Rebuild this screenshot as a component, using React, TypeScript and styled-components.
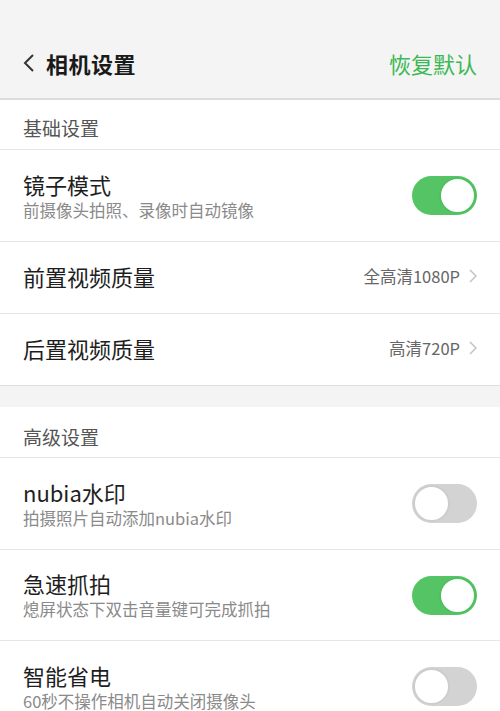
import React, { useState } from 'react';
import styled, { createGlobalStyle } from 'styled-components';

const GlobalStyle = createGlobalStyle`
  body {
    margin: 0;
    background: #ffffff;
    font-family: "Noto Sans CJK SC", "Noto Sans", sans-serif;
  }
`;

const Page = styled.div`
  width: 500px;
  min-height: 711px;
  background: #ffffff;
`;

const Header = styled.header`
  height: 100px;
  box-sizing: border-box;
  background: #f4f4f4;
  border-bottom: 2px solid #dcdcdc;
  display: flex;
  align-items: center;
  justify-content: space-between;
  padding: 28px 23px 0 22px;
`;

const TitleWrap = styled.div`
  display: flex;
  align-items: center;
  gap: 10px;
`;

const Title = styled.h1`
  margin: 0;
  font-size: 22px;
  font-weight: 700;
  color: #1a1a1a;
  letter-spacing: 0.5px;
`;

const Reset = styled.span`
  font-size: 22px;
  color: #3cb854;
`;

const SectionHeader = styled.div<{ $height: number; $offset: number }>`
  height: ${({ $height }) => $height}px;
  box-sizing: border-box;
  padding: ${({ $offset }) => $offset}px 23px 0;
  display: flex;
  align-items: center;
  font-size: 19px;
  color: #555555;
  border-bottom: 1px solid #e6e6e6;
`;

const Row = styled.div<{ $height: number; $last?: boolean }>`
  height: ${({ $height }) => $height}px;
  box-sizing: border-box;
  padding: 0 23px;
  display: flex;
  align-items: center;
  justify-content: space-between;
  border-bottom: ${({ $last }) => ($last ? 'none' : '1px solid #e6e6e6')};
`;

const TextCol = styled.div`
  display: flex;
  flex-direction: column;
`;

const RowTitle = styled.div<{ $single?: boolean }>`
  font-size: 22px;
  line-height: 28px;
  color: #1e1e1e;
  margin-top: ${({ $single }) => ($single ? '-3px' : '0')};
`;

const RowSub = styled.div`
  font-size: 16.5px;
  line-height: 24px;
  color: #8a8a8a;
`;

const Value = styled.div`
  display: flex;
  align-items: center;
  gap: 9px;
  font-size: 16.5px;
  color: #666666;
  margin-top: -3px;
`;

const Gap = styled.div`
  height: 21px;
  background: #f4f4f4;
  border-top: 1px solid #dedede;
`;

const Track = styled.button<{ $on: boolean }>`
  position: relative;
  width: 65px;
  height: 39px;
  padding: 0;
  border-radius: 20px;
  border: none;
  cursor: pointer;
  background: ${({ $on }) => ($on ? '#55c465' : '#d3d3d3')};
  flex-shrink: 0;
`;

const Knob = styled.span<{ $on: boolean }>`
  position: absolute;
  top: 1px;
  left: ${({ $on }) => ($on ? '27px' : '1px')};
  width: 37px;
  height: 37px;
  box-sizing: border-box;
  border-radius: 50%;
  background: #ffffff;
  border: 2px solid ${({ $on }) => ($on ? '#4fbf60' : '#cdcdcd')};
`;

const Toggle: React.FC<{ initial: boolean }> = ({ initial }) => {
  const [on, setOn] = useState(initial);
  return (
    <Track $on={on} onClick={() => setOn(!on)}>
      <Knob $on={on} />
    </Track>
  );
};

const BackIcon = () => (
  <svg width="14" height="22" viewBox="0 0 14 22">
    <path d="M11 3 L3 11 L11 19" fill="none" stroke="#333" strokeWidth="2" />
  </svg>
);

const Chevron = () => (
  <svg width="8" height="14" viewBox="0 0 8 14">
    <path d="M1 1 L7 7 L1 13" fill="none" stroke="#c2c2c2" strokeWidth="1.5" />
  </svg>
);

const App: React.FC = () => (
  <Page>
    <GlobalStyle />
    <Header>
      <TitleWrap>
        <BackIcon />
        <Title>相机设置</Title>
      </TitleWrap>
      <Reset>恢复默认</Reset>
    </Header>

    <SectionHeader $height={50} $offset={6}>基础设置</SectionHeader>
    <Row $height={92}>
      <TextCol>
        <RowTitle>镜子模式</RowTitle>
        <RowSub>前摄像头拍照、录像时自动镜像</RowSub>
      </TextCol>
      <Toggle initial />
    </Row>
    <Row $height={72}>
      <RowTitle $single>前置视频质量</RowTitle>
      <Value>
        全高清1080P
        <Chevron />
      </Value>
    </Row>
    <Row $height={71} $last>
      <RowTitle $single>后置视频质量</RowTitle>
      <Value>
        高清720P
        <Chevron />
      </Value>
    </Row>
    <Gap />

    <SectionHeader $height={51} $offset={8}>高级设置</SectionHeader>
    <Row $height={92}>
      <TextCol>
        <RowTitle>nubia水印</RowTitle>
        <RowSub>拍摄照片自动添加nubia水印</RowSub>
      </TextCol>
      <Toggle initial={false} />
    </Row>
    <Row $height={91}>
      <TextCol>
        <RowTitle>急速抓拍</RowTitle>
        <RowSub>熄屏状态下双击音量键可完成抓拍</RowSub>
      </TextCol>
      <Toggle initial />
    </Row>
    <Row $height={92}>
      <TextCol>
        <RowTitle>智能省电</RowTitle>
        <RowSub>60秒不操作相机自动关闭摄像头</RowSub>
      </TextCol>
      <Toggle initial={false} />
    </Row>
  </Page>
);

export default App;
